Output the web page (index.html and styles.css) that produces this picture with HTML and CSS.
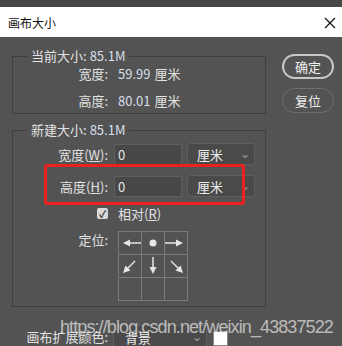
FILE: index.html
```html
<!DOCTYPE html>
<html lang="zh-CN">
<head>
  <meta charset="UTF-8">
  <title>画布大小</title>
  <link rel="stylesheet" href="styles.css">
</head>
<body>

  <div class="top-strip"></div>

  <div class="titlebar">
    <span class="title">画布大小</span>
    <svg class="close" width="12" height="12" viewBox="0 0 12 12">
      <path d="M1 1 L11 11 M11 1 L1 11" stroke="#111" stroke-width="1.2" fill="none"/>
    </svg>
  </div>

  <div class="dialog">
    <div class="left">
      <fieldset class="group current">
        <legend>当前大小:<span class="num">85.1M</span></legend>
        <div class="info-row"><span class="label">宽度:</span><span class="num">59.99</span> 厘米</div>
        <div class="info-row"><span class="label">高度:</span><span class="num">80.01</span> 厘米</div>
      </fieldset>

      <fieldset class="group new">
        <legend>新建大小:<span class="num">85.1M</span></legend>
        <div class="field-row">
          <span class="label">宽度(<u>W</u>):</span>
          <div class="input">0</div>
          <div class="select">厘米<span class="chev">⌄</span></div>
        </div>
        <div class="field-row">
          <span class="label">高度(<u>H</u>):</span>
          <div class="input">0</div>
          <div class="select">厘米<span class="chev">⌄</span></div>
        </div>
        <div class="check-row">
          <span class="label"><span class="checkbox">✓</span></span>
          <span>相对(<u>R</u>)</span>
        </div>
        <div class="anchor-row">
          <span class="label">定位:</span>
          <div class="anchor-grid">
            <div class="cell">
              <svg viewBox="0 0 22 22"><path d="M10 11 H22" stroke="#e6e6e6" stroke-width="1.5"/><path d="M4 11 L11 7.5 L11 14.5 Z" fill="#e6e6e6"/></svg>
            </div>
            <div class="cell">
              <svg viewBox="0 0 22 22"><circle cx="11" cy="11" r="3.5" fill="#e6e6e6"/></svg>
            </div>
            <div class="cell">
              <svg viewBox="0 0 22 22"><path d="M0 11 H12" stroke="#e6e6e6" stroke-width="1.5"/><path d="M18 11 L11 7.5 L11 14.5 Z" fill="#e6e6e6"/></svg>
            </div>
            <div class="cell">
              <svg viewBox="0 0 22 22"><path d="M16 6 L8 14" stroke="#e6e6e6" stroke-width="1.5"/><path d="M4 18 L6.5 10.5 L11.5 15.5 Z" fill="#e6e6e6"/></svg>
            </div>
            <div class="cell">
              <svg viewBox="0 0 22 22"><path d="M11 2 V13" stroke="#e6e6e6" stroke-width="1.5"/><path d="M11 19 L7.5 12 L14.5 12 Z" fill="#e6e6e6"/></svg>
            </div>
            <div class="cell">
              <svg viewBox="0 0 22 22"><path d="M6 6 L14 14" stroke="#e6e6e6" stroke-width="1.5"/><path d="M18 18 L15.5 10.5 L10.5 15.5 Z" fill="#e6e6e6"/></svg>
            </div>
            <div class="cell"></div>
            <div class="cell"></div>
            <div class="cell"></div>
          </div>
        </div>
      </fieldset>

      <div class="ext-row">
        <span class="label">画布扩展颜色:</span>
        <div class="select wide">背景<span class="chev">⌄</span></div>
        <div class="swatch"></div>
      </div>
    </div>

    <div class="buttons">
      <div class="btn primary">确定</div>
      <div class="btn">复位</div>
    </div>
  </div>

  <!-- annotation + watermark on top of the screenshot -->
  <div class="highlight"></div>
  <div class="watermark">https://blog.csdn.net/weixin_43837522</div>

</body>
</html>
```

FILE: styles.css
```css
body {
  margin: 0;
  width: 342px;
  height: 346px;
  overflow: hidden;
  position: relative;
  background: #535353;
  font-family: "Noto Sans CJK SC", "Noto Sans", sans-serif;
  font-size: 13px;
  color: #e2e2e2;
}

.top-strip {
  height: 7px;
  background: #464646;
}

.titlebar {
  height: 30px;
  background: #fff;
  display: flex;
  align-items: center;
  justify-content: space-between;
  padding: 0 6px 0 8px;
  color: #111;
  font-size: 12px;
}

.close {
  margin-top: 1px;
}

.dialog {
  display: flex;
  gap: 16px;
  padding: 11px 0 0 12px;
}

.left {
  width: 254px;
}

.group {
  margin: 0;
  padding: 0;
  width: 254px;
  box-sizing: border-box;
  border: 1px solid #3f3f3f;
}

.group legend {
  margin-left: 14px;
  padding: 0 4px;
  line-height: 16px;
}

.group legend .num {
  margin-left: 3px;
}

.num {
  color: #d6dfea;
}

.current {
  padding-bottom: 4px;
}

.info-row {
  display: flex;
  align-items: center;
  height: 18px;
}

.info-row + .info-row {
  margin-top: 9px;
}

.info-row .label {
  margin-right: 10px;
}

.label {
  width: 95px;
  text-align: right;
  flex-shrink: 0;
}

.info-row .num {
  margin-right: 4px;
}

.new {
  margin-top: 8px;
  padding: 5px 0 5px 0;
}

.field-row {
  display: flex;
  align-items: center;
  height: 22px;
}

.field-row + .field-row {
  margin-top: 10px;
}

.field-row .label {
  margin-right: 6px;
}

.input {
  width: 68px;
  height: 21px;
  box-sizing: border-box;
  background: #474747;
  border: 1px solid #5e5e5e;
  padding-left: 3px;
  line-height: 19px;
  color: #e6e6e6;
}

.select {
  width: 68px;
  height: 22px;
  margin-left: 5px;
  box-sizing: border-box;
  background: #4a4a4a;
  border: 1px solid #5f5f5f;
  border-radius: 3px;
  padding-left: 9px;
  display: flex;
  align-items: center;
  justify-content: space-between;
  color: #ececec;
}

.chev {
  color: #a0a0a0;
  font-size: 12px;
  margin-right: 4px;
  margin-top: -4px;
}

.check-row {
  display: flex;
  align-items: center;
  height: 18px;
  margin-top: 7px;
}

.check-row .label {
  margin-right: 10px;
  display: flex;
  justify-content: flex-end;
}

.checkbox {
  width: 11px;
  height: 11px;
  background: #d9d9d9;
  border-radius: 2px;
  color: #333;
  font-size: 10px;
  line-height: 11px;
  text-align: center;
  font-weight: bold;
}

.anchor-row {
  display: flex;
  margin-top: 9px;
}

.anchor-row .label {
  margin-right: 10px;
  line-height: 18px;
}

.anchor-grid {
  display: grid;
  grid-template-columns: repeat(3, 22px);
  grid-template-rows: repeat(3, 22px);
  gap: 1px;
  padding: 1px;
  background: #7a7a7a;
}

.cell {
  background: #535353;
}

.cell svg {
  display: block;
  width: 22px;
  height: 22px;
}

.ext-row {
  display: flex;
  align-items: flex-start;
  margin-top: 18px;
}

.ext-row .label {
  width: 96px;
  margin-right: 5px;
  line-height: 24px;
}

.select.wide {
  width: 94px;
  height: 24px;
  margin-left: 0;
  padding-left: 11px;
}

.swatch {
  width: 15px;
  height: 15px;
  margin: 6px 0 0 6px;
  background: #fff;
  border: 1px solid #888;
  box-sizing: border-box;
}

.buttons {
  display: flex;
  flex-direction: column;
  gap: 9px;
  padding-top: 6px;
}

.btn {
  width: 52px;
  height: 25px;
  box-sizing: border-box;
  border: 1px solid #6f6f6f;
  border-radius: 13px;
  text-align: center;
  line-height: 23px;
  color: #f0f0f0;
}

.btn.primary {
  border: 2px solid #c8c8c8;
  line-height: 21px;
}

.highlight {
  position: absolute;
  left: 44px;
  top: 164px;
  width: 201px;
  height: 41px;
  box-sizing: border-box;
  border: 3px solid #e8231f;
  border-radius: 3px;
}

.watermark {
  position: absolute;
  left: 60px;
  top: 316px;
  font-family: "Liberation Sans", Arial, sans-serif;
  font-size: 18px;
  letter-spacing: -0.9px;
  line-height: 22px;
  color: rgba(235, 235, 235, 0.7);
  white-space: nowrap;
}
```
